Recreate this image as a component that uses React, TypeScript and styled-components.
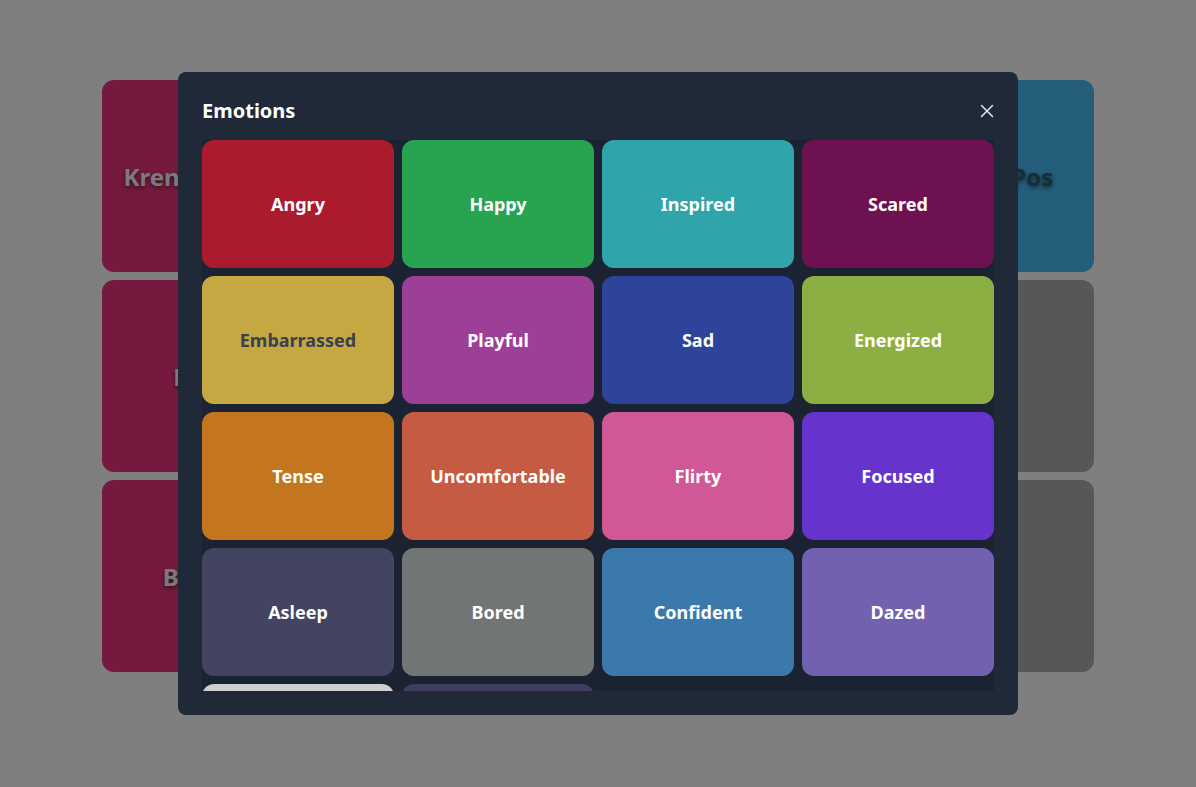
import React from "react";
import styled, { createGlobalStyle } from "styled-components";

const GlobalStyle = createGlobalStyle`
  * { box-sizing: border-box; }
  html, body { margin: 0; padding: 0; background: #ffffff; }
  body { font-family: "Noto Sans", "Open Sans", sans-serif; }
`;

const Page = styled.div`
  padding: 80px 102px;
  min-height: 787px;
`;

const BgGrid = styled.div`
  display: grid;
  grid-template-columns: repeat(5, 192px);
  grid-auto-rows: 192px;
  gap: 8px;
`;

const BgCard = styled.div<{ $bg: string; $fg: string }>`
  background: ${(p) => p.$bg};
  color: ${(p) => p.$fg};
  border-radius: 12px;
  display: flex;
  align-items: center;
  justify-content: center;
  font-weight: 700;
  font-size: 24px;
  text-shadow: 0 2px 4px rgba(0, 0, 0, 0.55);
  white-space: nowrap;
`;

const Overlay = styled.div`
  position: fixed;
  inset: 0;
  background: rgba(0, 0, 0, 0.5);
  display: flex;
  align-items: center;
  justify-content: center;
`;

const Modal = styled.div`
  width: 840px;
  height: 643px;
  background: #202938;
  border-radius: 8px;
  padding: 24px;
  display: flex;
  flex-direction: column;
  gap: 14px;
`;

const Header = styled.div`
  height: 30px;
  display: flex;
  align-items: center;
  justify-content: space-between;
`;

const Title = styled.h2`
  margin: 0;
  font-size: 20px;
  line-height: 30px;
  font-weight: 700;
  color: #ffffff;
`;

const CloseButton = styled.button`
  width: 30px;
  height: 30px;
  margin-right: -8px;
  padding: 0;
  border: none;
  background: transparent;
  color: #e5e7eb;
  display: flex;
  align-items: center;
  justify-content: center;
  cursor: pointer;
`;

const Scroll = styled.div`
  flex: 1;
  min-height: 0;
  overflow: hidden;
  background: #1b2332;
`;

const Grid = styled.div`
  display: grid;
  grid-template-columns: repeat(4, 192px);
  grid-auto-rows: 128px;
  gap: 8px;
`;

const EmotionCard = styled.button<{ $bg: string; $fg: string }>`
  border: none;
  border-radius: 12px;
  background: ${(p) => p.$bg};
  color: ${(p) => p.$fg};
  font-family: "Noto Sans", "Open Sans", sans-serif;
  font-size: 18px;
  font-weight: 700;
  display: flex;
  align-items: center;
  justify-content: center;
  padding: 0;
  cursor: pointer;
`;

const bgCards = [
  { label: "Krenkelsene", bg: "#ea347c", fg: "#f4f4f4" },
  { label: "", bg: "#ea347c", fg: "#f4f4f4" },
  { label: "", bg: "#ea347c", fg: "#f4f4f4" },
  { label: "", bg: "#ea347c", fg: "#f4f4f4" },
  { label: "Extra Pos", bg: "#48bcf4", fg: "#3a5470" },
  { label: "Lyst", bg: "#ea347c", fg: "#f4f4f4" },
  { label: "", bg: "#ea347c", fg: "#f4f4f4" },
  { label: "", bg: "#ea347c", fg: "#f4f4f4" },
  { label: "", bg: "#ea347c", fg: "#f4f4f4" },
  { label: "", bg: "#aeaeae", fg: "#f4f4f4" },
  { label: "Bored", bg: "#ea347c", fg: "#f4f4f4" },
  { label: "", bg: "#ea347c", fg: "#f4f4f4" },
  { label: "", bg: "#ea347c", fg: "#f4f4f4" },
  { label: "", bg: "#ea347c", fg: "#f4f4f4" },
  { label: "", bg: "#aeaeae", fg: "#f4f4f4" },
];

const emotions = [
  { label: "Angry", bg: "#aa1b2d", fg: "#ffffff" },
  { label: "Happy", bg: "#28a34f", fg: "#ffffff" },
  { label: "Inspired", bg: "#30a4ab", fg: "#ffffff" },
  { label: "Scared", bg: "#6e1150", fg: "#ffffff" },
  { label: "Embarrassed", bg: "#c6a842", fg: "#374151" },
  { label: "Playful", bg: "#9e3f97", fg: "#ffffff" },
  { label: "Sad", bg: "#2e449b", fg: "#ffffff" },
  { label: "Energized", bg: "#8caf44", fg: "#ffffff" },
  { label: "Tense", bg: "#c4761f", fg: "#ffffff" },
  { label: "Uncomfortable", bg: "#c55b42", fg: "#ffffff" },
  { label: "Flirty", bg: "#d05896", fg: "#ffffff" },
  { label: "Focused", bg: "#6633cc", fg: "#ffffff" },
  { label: "Asleep", bg: "#424461", fg: "#ffffff" },
  { label: "Bored", bg: "#717573", fg: "#ffffff" },
  { label: "Confident", bg: "#3b79ac", fg: "#ffffff" },
  { label: "Dazed", bg: "#7161b0", fg: "#ffffff" },
  { label: "Calm", bg: "#cfcfcf", fg: "#374151" },
  { label: "Lonely", bg: "#3f3d60", fg: "#ffffff" },
];

export default function App() {
  return (
    <>
      <GlobalStyle />
      <Page>
        <BgGrid>
          {bgCards.map((c, i) => (
            <BgCard key={i} $bg={c.bg} $fg={c.fg}>
              {c.label}
            </BgCard>
          ))}
        </BgGrid>
      </Page>
      <Overlay>
        <Modal role="dialog" aria-label="Emotions">
          <Header>
            <Title>Emotions</Title>
            <CloseButton aria-label="Close">
              <svg width="14" height="14" viewBox="0 0 14 14" fill="none">
                <path d="M1.5 1.5 L12.5 12.5 M12.5 1.5 L1.5 12.5" stroke="currentColor" strokeWidth="1.5" strokeLinecap="round" />
              </svg>
            </CloseButton>
          </Header>
          <Scroll>
            <Grid>
              {emotions.map((e) => (
                <EmotionCard key={e.label} $bg={e.bg} $fg={e.fg}>
                  {e.label}
                </EmotionCard>
              ))}
            </Grid>
          </Scroll>
        </Modal>
      </Overlay>
    </>
  );
}
